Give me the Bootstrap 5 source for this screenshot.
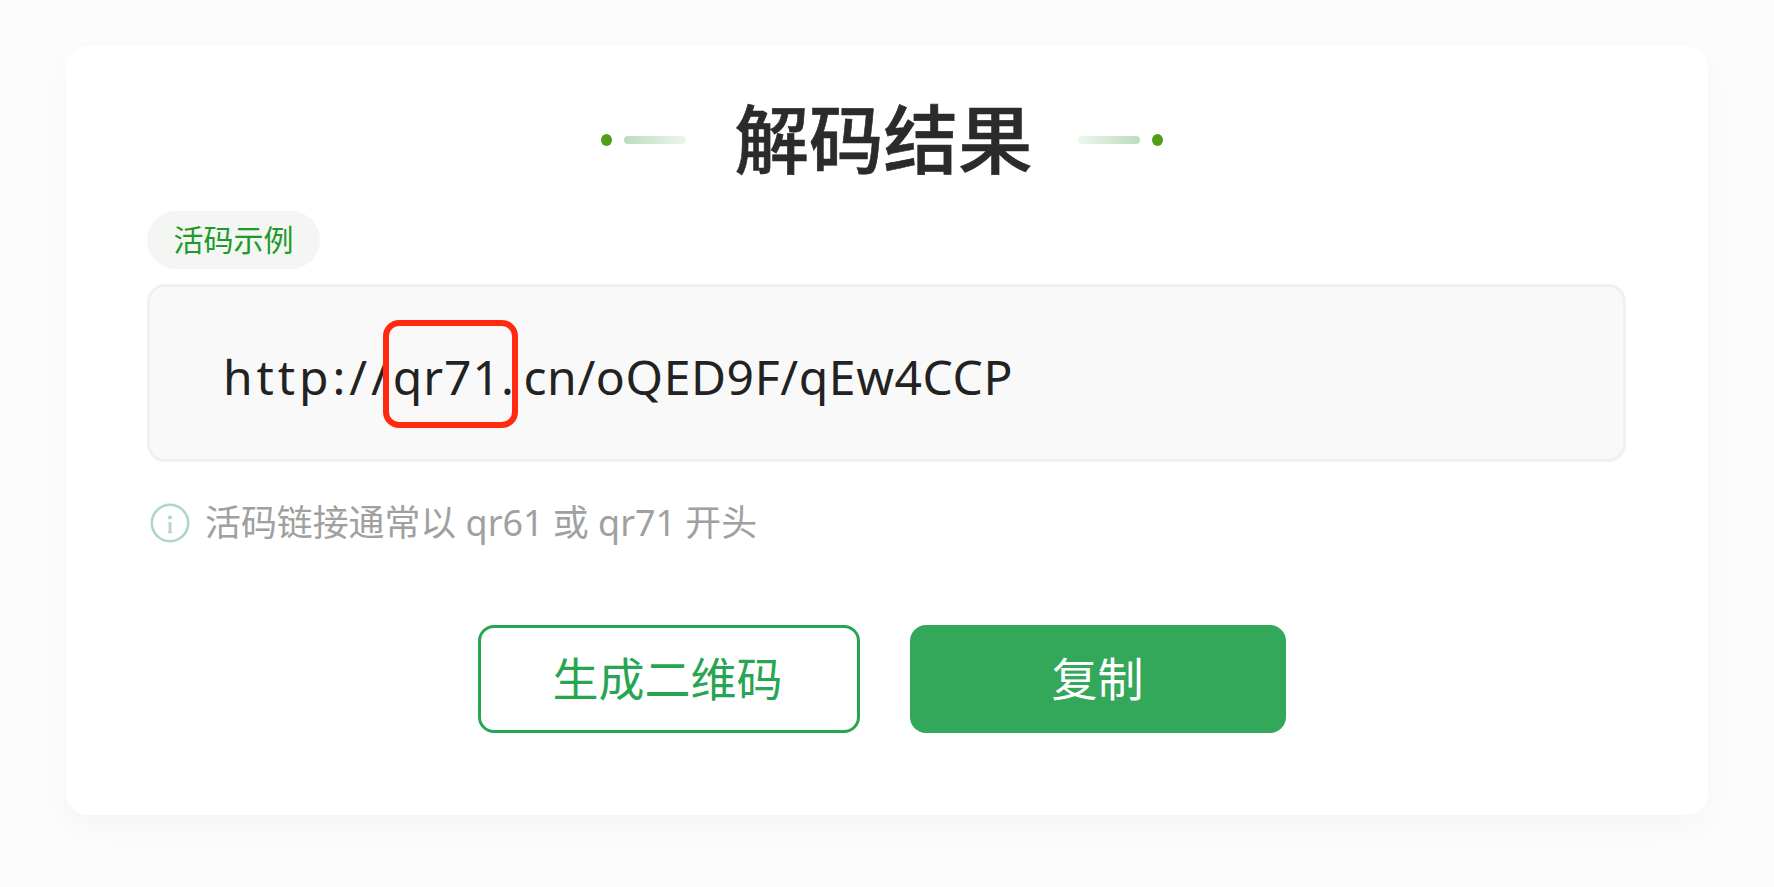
<!DOCTYPE html>
<html lang="zh-CN">
<head>
<meta charset="utf-8">
<title>解码结果</title>
<link href="https://cdn.jsdelivr.net/npm/bootstrap@5.3.0/dist/css/bootstrap.min.css" rel="stylesheet">
<style>
  html, body { height: 100%; }
  body { background: #fcfcfc; font-family: "Noto Sans", "Noto Sans CJK SC", sans-serif; overflow: hidden; }
  .stage { padding: 46px 66px 0 66px; }
  .sheet { background: #fff; border: 0; border-radius: 22px; box-shadow: 0 12px 34px rgba(0,0,0,.03); padding: 57px 82px 82px 81px; }
  .head-row { padding-right: 9px; margin-bottom: 34px; }
  .head-dot { width: 11px; height: 12px; border-radius: 50%; background: #4f9e16; }
  .head-bar { width: 62px; height: 8px; border-radius: 4px; margin: 0 12.5px; }
  .bar-l { background: linear-gradient(90deg, #bcdcbc, #eef6ee); margin-left: 12px; }
  .bar-r { background: linear-gradient(90deg, #eef6ee, #bcdcbc); margin-right: 12px; }
  .head-title { font-family: "Noto Sans CJK SC", sans-serif; font-size: 74.5px; line-height: 66px; padding-bottom: 8px; font-weight: 500; color: #2b2b2b; margin: 0 33px 0 36px; -webkit-text-stroke: .6px #2b2b2b; }
  .tag-pill { height: 58px; width: 173px; border-radius: 29px; background: #f3f6f3; color: #1f9a2a; font-family: "Noto Sans CJK SC", sans-serif; font-size: 30px; margin-bottom: 15px; padding-bottom: 4px; }
  .url-box { height: 178px; background: #f9f9f9; border: 3px solid #f0f0f0; border-radius: 18px; padding-left: 73px; padding-top: 7px; color: #222; font-size: 48px; line-height: 1; letter-spacing: .62px; }
  .url-proto { letter-spacing: 3.9px; }
  .url-sep { letter-spacing: 9.6px; }
  .hit-word { position: relative; letter-spacing: 1px; }
  .hit-frame { position: absolute; left: -10px; right: -17px; top: -24px; bottom: -19px; border: 6px solid #ff2a10; border-radius: 16px; }
  .hint-row { margin-top: 41px; height: 40px; gap: 15px; color: #a0a0a0; font-size: 35.9px; padding-left: 3px; }
  .action-row { margin-top: 82px; gap: 50px; padding-right: 10px; }
  .act-btn { height: 108px; border-radius: 16px; font-family: "Noto Sans CJK SC", sans-serif; font-size: 46px; line-height: 1; padding: 0 0 6px; }
  .act-outline { width: 382px; border: 3px solid #27a552; color: #27a552; background: #fff; padding-right: 2px; }
  .act-solid { width: 376px; border: 0; color: #fff; background: #34a85a; }
</style>
</head>
<body>
<div class="stage">
  <div class="card sheet">
    <div class="d-flex align-items-center justify-content-center head-row">
      <span class="head-dot"></span>
      <span class="head-bar bar-l"></span>
      <h1 class="head-title">解码结果</h1>
      <span class="head-bar bar-r"></span>
      <span class="head-dot"></span>
    </div>
    <div class="d-flex align-items-center justify-content-center tag-pill">活码示例</div>
    <div class="d-flex align-items-center url-box">
      <span><span class="url-proto">http://</span><span class="hit-word">qr71<span class="hit-frame"></span></span><span class="url-sep">.</span>cn/oQED9F/qEw4CCP</span>
    </div>
    <div class="d-flex align-items-center hint-row">
      <svg width="40" height="40" viewBox="0 0 40 40" fill="none" aria-hidden="true">
        <circle cx="20" cy="20" r="18.200" stroke="#b0d6c4" stroke-width="2.600"/>
        <circle cx="20" cy="14.500" r="2.100" fill="#b0d6c4"/>
        <path d="M20 19v10.500" stroke="#b0d6c4" stroke-width="2.800"/>
        <path d="M17.800 29.500h4.400" stroke="#b0d6c4" stroke-width="1.400"/>
      </svg>
      <span>活码链接通常以 qr61 或 qr71 开头</span>
    </div>
    <div class="d-flex justify-content-center action-row">
      <button type="button" class="btn act-btn act-outline">生成二维码</button>
      <button type="button" class="btn act-btn act-solid">复制</button>
    </div>
  </div>
</div>
<script src="https://cdn.jsdelivr.net/npm/bootstrap@5.3.0/dist/js/bootstrap.bundle.min.js"></script>
</body>
</html>
